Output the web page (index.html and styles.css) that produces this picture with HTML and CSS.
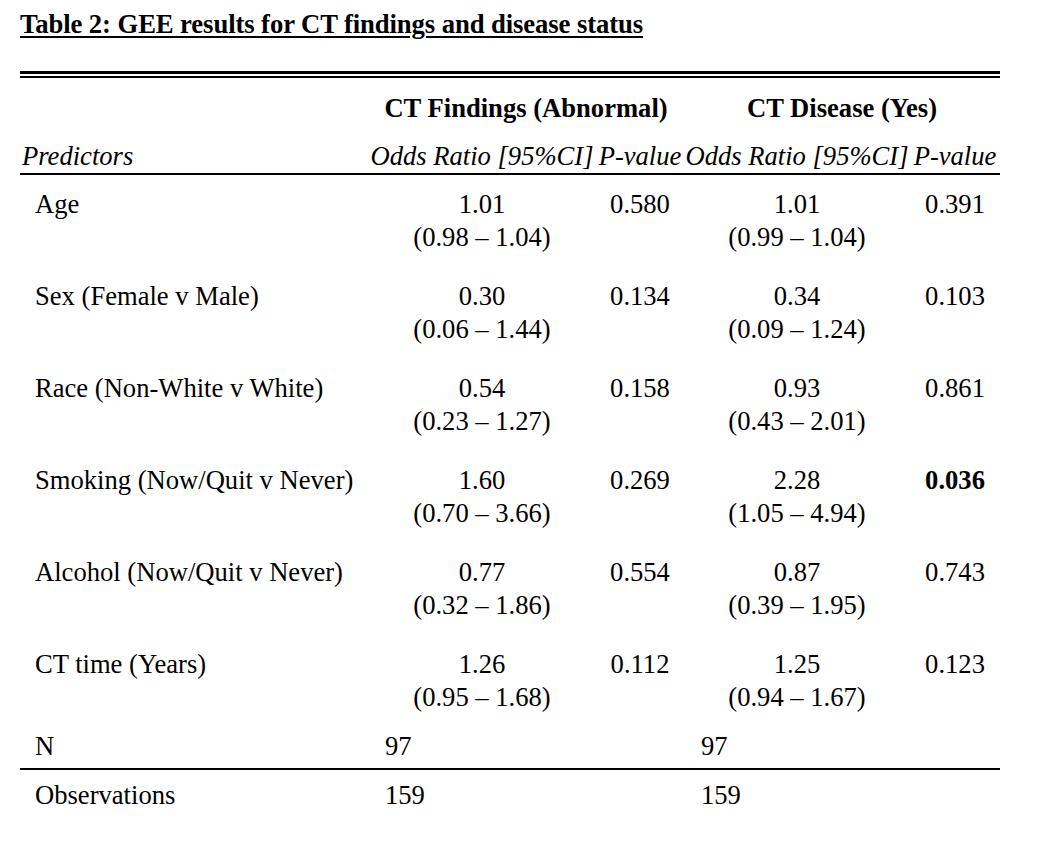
FILE: index.html
```html
<!DOCTYPE html>
<html>
<head>
<meta charset="utf-8">
<link rel="stylesheet" href="styles.css">
</head>
<body>
<h1 class="title">Table 2: GEE results for CT findings and disease status</h1>
<div class="rule-top">
<table class="gee">
  <colgroup>
    <col class="c-pred"><col class="c-or"><col class="c-p"><col class="c-or2"><col class="c-p2">
  </colgroup>
  <thead>
    <tr class="group">
      <th></th>
      <th colspan="2">CT Findings (Abnormal)</th>
      <th colspan="2">CT Disease (Yes)</th>
    </tr>
    <tr class="sub">
      <th class="pred">Predictors</th>
      <th>Odds Ratio [95%CI]</th>
      <th>P-value</th>
      <th>Odds Ratio [95%CI]</th>
      <th>P-value</th>
    </tr>
  </thead>
  <tbody>
    <tr class="row">
      <td class="name">Age</td>
      <td class="or">1.01<br>(0.98 – 1.04)</td>
      <td class="p">0.580</td>
      <td class="or">1.01<br>(0.99 – 1.04)</td>
      <td class="p">0.391</td>
    </tr>
    <tr class="row">
      <td class="name">Sex (Female v Male)</td>
      <td class="or">0.30<br>(0.06 – 1.44)</td>
      <td class="p">0.134</td>
      <td class="or">0.34<br>(0.09 – 1.24)</td>
      <td class="p">0.103</td>
    </tr>
    <tr class="row">
      <td class="name">Race (Non-White v White)</td>
      <td class="or">0.54<br>(0.23 – 1.27)</td>
      <td class="p">0.158</td>
      <td class="or">0.93<br>(0.43 – 2.01)</td>
      <td class="p">0.861</td>
    </tr>
    <tr class="row">
      <td class="name">Smoking (Now/Quit v Never)</td>
      <td class="or">1.60<br>(0.70 – 3.66)</td>
      <td class="p">0.269</td>
      <td class="or">2.28<br>(1.05 – 4.94)</td>
      <td class="p"><strong>0.036</strong></td>
    </tr>
    <tr class="row">
      <td class="name">Alcohol (Now/Quit v Never)</td>
      <td class="or">0.77<br>(0.32 – 1.86)</td>
      <td class="p">0.554</td>
      <td class="or">0.87<br>(0.39 – 1.95)</td>
      <td class="p">0.743</td>
    </tr>
    <tr class="row">
      <td class="name">CT time (Years)</td>
      <td class="or">1.26<br>(0.95 – 1.68)</td>
      <td class="p">0.112</td>
      <td class="or">1.25<br>(0.94 – 1.67)</td>
      <td class="p">0.123</td>
    </tr>
    <tr class="nrow">
      <td class="name">N</td>
      <td class="count" colspan="2">97</td>
      <td class="count" colspan="2">97</td>
    </tr>
    <tr class="obs">
      <td class="name">Observations</td>
      <td class="count" colspan="2">159</td>
      <td class="count" colspan="2">159</td>
    </tr>
  </tbody>
</table>
</div>
</body>
</html>
```
FILE: styles.css
```css
html, body {
  margin: 0;
  padding: 0;
  background: #ffffff;
}
body {
  font-family: "Liberation Serif", "Times New Roman", serif;
  color: #000;
  padding: 0 20px;
}
.title {
  margin: 0;
  padding-top: 9px;
  font-size: 26.7px;
  font-weight: bold;
  line-height: 30px;
  letter-spacing: -0.1px;
  text-decoration: underline;
  text-decoration-thickness: 2px;
  text-underline-offset: 3px;
}
.rule-top {
  margin-top: 32px;
  width: 980px;
  border-top: 3px solid #000;
  padding-top: 2px;
}
.gee {
  width: 980px;
  border-collapse: collapse;
  table-layout: fixed;
  font-size: 26.6px;
  line-height: 33px;
  border-top: 2px solid #000;
}
.c-pred { width: 348px; }
.c-or { width: 228px; }
.c-p { width: 88px; }
.c-or2 { width: 226px; }
.c-p2 { width: 90px; }
.gee th, .gee td {
  padding: 0;
  vertical-align: top;
}
.group th {
  font-weight: bold;
  text-align: center;
  padding-top: 14px;
  padding-bottom: 15px;
}
.sub th {
  font-style: italic;
  font-weight: normal;
  text-align: center;
  white-space: nowrap;
  border-bottom: 2px solid #000;
  padding-bottom: 0;
}
.sub th.pred {
  text-align: left;
  padding-left: 2px;
}
.name {
  text-align: left;
  padding-left: 15px !important;
}
.row td {
  padding-top: 13px;
  padding-bottom: 13px;
}
.or, .p {
  text-align: center;
}
.p strong {
  font-weight: bold;
}
.count {
  text-align: left;
  padding-left: 17px !important;
}
.nrow td {
  padding-top: 3px;
  padding-bottom: 5px;
  border-bottom: 2px solid #000;
}
.obs td {
  padding-top: 9px;
}
```
